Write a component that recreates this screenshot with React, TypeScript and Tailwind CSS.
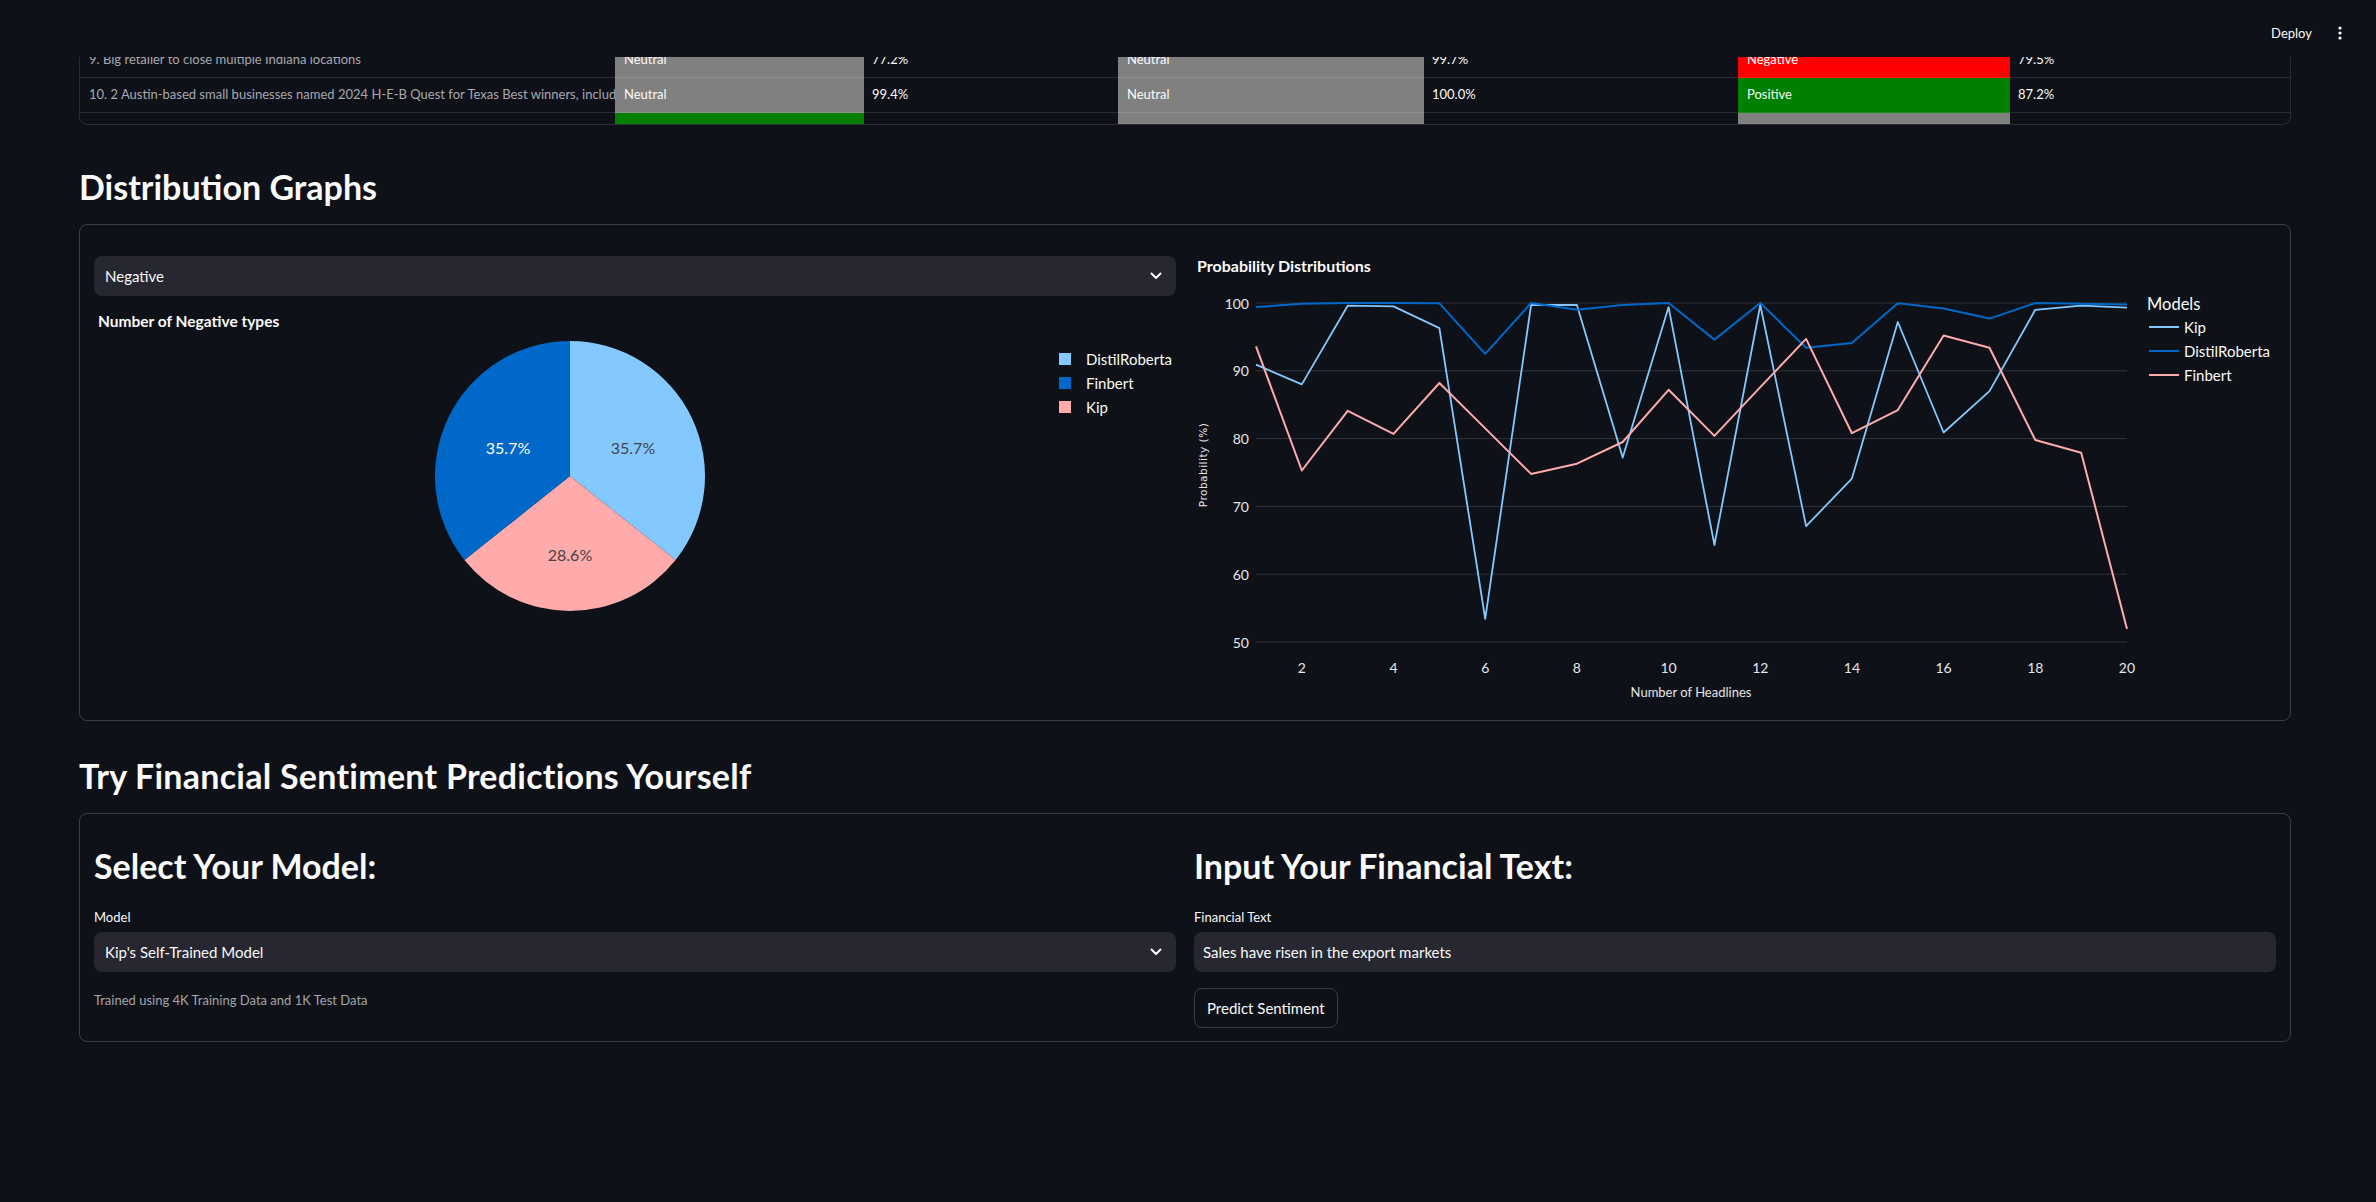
import React from "react";

const KIP = [90.9, 88.0, 99.6, 99.5, 96.3, 53.4, 99.7, 99.7, 77.2, 99.4, 64.3, 99.7, 67.1, 74.1, 97.2, 80.9, 87.0, 99.0, 99.6, 99.3];
const DISTIL = [99.4, 99.9, 100, 100, 99.95, 92.5, 100, 99.0, 99.7, 100, 94.6, 100, 93.4, 94.1, 99.95, 99.2, 97.7, 100, 99.9, 99.8];
const FIN = [93.6, 75.3, 84.1, 80.7, 88.2, 81.5, 74.8, 76.3, 79.5, 87.2, 80.4, 87.6, 94.7, 80.8, 84.2, 95.2, 93.4, 79.8, 77.9, 51.9];

const X = (i: number) => 62 + i * 45.842;
const Y = (v: number) => 20 + (100 - v) * 6.78;
const pts = (arr: number[]) => arr.map((v, i) => `${X(i).toFixed(1)},${Y(v).toFixed(1)}`).join(" ");

type Cell = { label: string; pct: string; bg: string };
type Row = { head: string; cells: Cell[] };

const GRAY = "bg-[#808080]";
const RED = "bg-[#ff0000]";
const GREEN = "bg-[#008000]";

const ROWS: Row[] = [
  {
    head: "9. Big retailer to close multiple Indiana locations",
    cells: [
      { label: "Neutral", pct: "77.2%", bg: GRAY },
      { label: "Neutral", pct: "99.7%", bg: GRAY },
      { label: "Negative", pct: "79.5%", bg: RED },
    ],
  },
  {
    head: "10. 2 Austin-based small businesses named 2024 H-E-B Quest for Texas Best winners, including local bakery",
    cells: [
      { label: "Neutral", pct: "99.4%", bg: GRAY },
      { label: "Neutral", pct: "100.0%", bg: GRAY },
      { label: "Positive", pct: "87.2%", bg: GREEN },
    ],
  },
  {
    head: "",
    cells: [
      { label: "", pct: "", bg: GREEN },
      { label: "", pct: "", bg: GRAY },
      { label: "", pct: "", bg: GRAY },
    ],
  },
];

const LABEL_W = ["w-[249px]", "w-[306px]", "w-[272px]"];
const PCT_W = ["w-[254px]", "w-[314px]", "w-[280px]"];

function Header() {
  return (
    <div className="absolute left-0 right-0 top-0 z-10 flex h-[57px] items-start justify-end gap-[20px] bg-[#0e1117] pr-[28px] pt-[23px]">
      <span className="text-[13px] leading-[20px] text-[#fafafa]">Deploy</span>
      <svg width="16" height="20" viewBox="0 0 16 20" className="block">
        <circle cx="8" cy="5" r="1.6" fill="#fafafa" />
        <circle cx="8" cy="10" r="1.6" fill="#fafafa" />
        <circle cx="8" cy="15" r="1.6" fill="#fafafa" />
      </svg>
    </div>
  );
}

function DataTable() {
  return (
    <div className="h-[83px] overflow-hidden rounded-lg border border-[#2a2c33] text-[13px]">
      {ROWS.map((r, ri) => (
        <div key={ri} className="flex h-[35px]">
          <div className="flex w-[535px] items-center overflow-hidden whitespace-nowrap border-b border-[#2a2c33] pl-[9px] text-[#a7a9b0]">
            {r.head}
          </div>
          {r.cells.map((c, ci) => (
            <React.Fragment key={ci}>
              <div className={`${LABEL_W[ci]} ${c.bg} flex items-center border-b border-white/10 pl-[9px] text-[#fafafa]`}>{c.label}</div>
              <div className={`${PCT_W[ci]} flex items-center border-b border-[#2a2c33] pl-[8px] text-[#fafafa]`}>{c.pct}</div>
            </React.Fragment>
          ))}
        </div>
      ))}
    </div>
  );
}

function Chevron() {
  return (
    <svg width="12" height="8" viewBox="0 0 12 8" className="block">
      <path d="M1.5 1.5L6 6L10.5 1.5" stroke="#fafafa" strokeWidth="2" fill="none" strokeLinecap="round" strokeLinejoin="round" />
    </svg>
  );
}

function Select({ value }: { value: string }) {
  return (
    <div className="flex h-[40px] items-center justify-between rounded-lg bg-[#262730] pl-[11px] pr-[14px] text-[15px] text-[#fafafa]">
      <span>{value}</span>
      <Chevron />
    </div>
  );
}

function PieChart() {
  const cx = 476;
  const cy = 145;
  return (
    <svg width="1082" height="370" className="block">
      <path d="M476,145 L476,10 A135,135 0 0 1 581.6,229.1 Z" fill="#83c9ff" />
      <path d="M476,145 L581.6,229.1 A135,135 0 0 1 370.4,229.1 Z" fill="#ffabab" />
      <path d="M476,145 L370.4,229.1 A135,135 0 0 1 476,10 Z" fill="#0068c9" />
      <text x={cx + 63} y={cy - 29} textAnchor="middle" dominantBaseline="central" fontSize="16" fill="#444444">35.7%</text>
      <text x={cx - 62} y={cy - 29} textAnchor="middle" dominantBaseline="central" fontSize="16" fill="#ffffff">35.7%</text>
      <text x={cx} y={cy + 78} textAnchor="middle" dominantBaseline="central" fontSize="16" fill="#444444">28.6%</text>
      {[
        { n: "DistilRoberta", c: "#83c9ff" },
        { n: "Finbert", c: "#0068c9" },
        { n: "Kip", c: "#ffabab" },
      ].map((l, i) => (
        <g key={l.n}>
          <rect x="965" y={22 + i * 24} width="12" height="12" fill={l.c} />
          <text x="992" y={28 + i * 24} dominantBaseline="central" fontSize="15" fill="#fafafa">{l.n}</text>
        </g>
      ))}
    </svg>
  );
}

function LineChart() {
  const grid = [100, 90, 80, 70, 60, 50];
  const xt = [2, 4, 6, 8, 10, 12, 14, 16, 18, 20];
  return (
    <svg width="1082" height="425" className="block">
      {grid.map((g) => (
        <g key={g}>
          <line x1="62" x2="933" y1={Y(g)} y2={Y(g)} stroke="#31333f" strokeWidth="1" />
          <text x="55" y={Y(g)} textAnchor="end" dominantBaseline="central" fontSize="14" fill="#e6e6e9">{g}</text>
        </g>
      ))}
      {xt.map((t) => (
        <text key={t} x={X(t - 1)} y="384" textAnchor="middle" dominantBaseline="central" fontSize="14" fill="#e6e6e9">{t}</text>
      ))}
      <text x="497" y="409" textAnchor="middle" dominantBaseline="central" fontSize="13" fill="#e6e6e9">Number of Headlines</text>
      <text
        x="9"
        y="182"
        textAnchor="middle"
        dominantBaseline="central"
        fontSize="10.5"
        fill="#e6e6e9"
        transform="rotate(-90 9 182)"
        style={{ fontFamily: "'DejaVu Sans', sans-serif", letterSpacing: "0.5px" }}
      >
        Probability (%)
      </text>
      <polyline points={pts(KIP)} fill="none" stroke="#83c9ff" strokeWidth="1.8" strokeLinejoin="round" />
      <polyline points={pts(DISTIL)} fill="none" stroke="#0068c9" strokeWidth="2" strokeLinejoin="round" />
      <polyline points={pts(FIN)} fill="none" stroke="#ffabab" strokeWidth="2" strokeLinejoin="round" />
      <text x="953" y="21" dominantBaseline="central" fontSize="16.5" fill="#fafafa">Models</text>
      {[
        { n: "Kip", c: "#83c9ff" },
        { n: "DistilRoberta", c: "#0068c9" },
        { n: "Finbert", c: "#ffabab" },
      ].map((l, i) => (
        <g key={l.n}>
          <line x1="955" x2="985" y1={44 + i * 24} y2={44 + i * 24} stroke={l.c} strokeWidth="2" />
          <text x="990" y={44 + i * 24} dominantBaseline="central" fontSize="15" fill="#fafafa">{l.n}</text>
        </g>
      ))}
    </svg>
  );
}

export default function App() {
  return (
    <div className="relative min-h-screen w-full overflow-hidden bg-[#0e1117] font-['Lato',sans-serif] text-[#fafafa]">
      <Header />
      <main className="pl-[79px] pr-[85px] pt-[42px]">
        <DataTable />

        <h2 className="mt-[40px] text-[34px] font-bold leading-[43px] text-[#fafafa]">Distribution Graphs</h2>

        <div className="mt-[16px] grid h-[497px] grid-cols-2 gap-[18px] rounded-lg border border-[#3b3d45] px-[14px] pt-[31px]">
          <div className="flex flex-col">
            <Select value="Negative" />
            <div className="mt-[15px] pl-[4px] text-[15.5px] font-bold leading-[20px]">Number of Negative types</div>
            <PieChart />
          </div>
          <div className="flex flex-col">
            <div className="pl-[3px] text-[16px] font-bold leading-[19px]">Probability Distributions</div>
            <div className="mt-[8px]">
              <LineChart />
            </div>
          </div>
        </div>

        <h2 className="mt-[33px] text-[34px] font-bold leading-[43px] tracking-[0.25px] text-[#fafafa]">Try Financial Sentiment Predictions Yourself</h2>

        <div className="mt-[16px] grid h-[229px] grid-cols-2 gap-[18px] rounded-lg border border-[#3b3d45] px-[14px] pt-[30px]">
          <div className="flex flex-col">
            <h3 className="text-[34px] font-bold leading-[43px]">Select Your Model:</h3>
            <div className="mt-[20px] text-[13px] leading-[20px]">Model</div>
            <div className="mt-[5px]">
              <Select value="Kip's Self-Trained Model" />
            </div>
            <div className="mt-[18px] text-[13px] leading-[20px] text-[#a3a5ab]">Trained using 4K Training Data and 1K Test Data</div>
          </div>
          <div className="flex flex-col">
            <h3 className="text-[34px] font-bold leading-[43px]">Input Your Financial Text:</h3>
            <div className="mt-[20px] text-[13px] leading-[20px]">Financial Text</div>
            <div className="mt-[5px] flex h-[40px] items-center rounded-lg bg-[#262730] pl-[9px] text-[15px]">
              Sales have risen in the export markets
            </div>
            <div className="mt-[16px]">
              <button className="h-[40px] rounded-lg border border-[#3b3d45] bg-[#0e1117] px-[12px] text-[15px] text-[#fafafa]">
                Predict Sentiment
              </button>
            </div>
          </div>
        </div>
      </main>
    </div>
  );
}
